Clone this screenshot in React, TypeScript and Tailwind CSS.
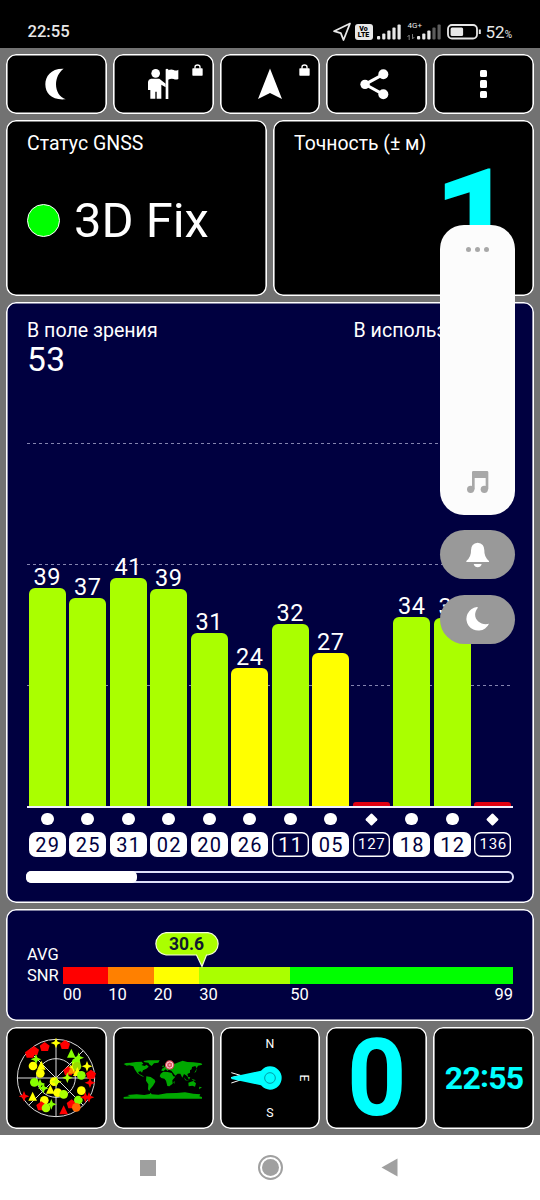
import type { ReactNode } from 'react';

const FONT = "font-['Roboto',sans-serif]";

interface Satellite {
  id: string;
  snr: number | null;
  height: number;
  color: string;
  used: boolean;
  shape: 'circle' | 'diamond';
}

const LIME = 'bg-[#aaff00]';
const YELLOW = 'bg-[#ffff00]';
const RED = 'bg-[#e00010]';

const satellites: Satellite[] = [
  { id: '29', snr: 39, height: 218, color: LIME, used: true, shape: 'circle' },
  { id: '25', snr: 37, height: 208, color: LIME, used: true, shape: 'circle' },
  { id: '31', snr: 41, height: 228, color: LIME, used: true, shape: 'circle' },
  { id: '02', snr: 39, height: 217, color: LIME, used: true, shape: 'circle' },
  { id: '20', snr: 31, height: 173, color: LIME, used: true, shape: 'circle' },
  { id: '26', snr: 24, height: 138, color: YELLOW, used: true, shape: 'circle' },
  { id: '11', snr: 32, height: 182, color: LIME, used: false, shape: 'circle' },
  { id: '05', snr: 27, height: 153, color: YELLOW, used: true, shape: 'circle' },
  { id: '127', snr: null, height: 4, color: RED, used: false, shape: 'diamond' },
  { id: '18', snr: 34, height: 189, color: LIME, used: true, shape: 'circle' },
  { id: '12', snr: 34, height: 188, color: LIME, used: true, shape: 'circle' },
  { id: '136', snr: null, height: 4, color: RED, used: false, shape: 'diamond' },
];

function Panel({ className, children }: { className: string; children?: ReactNode }) {
  return (
    <div className={`relative rounded-[10px] shadow-[inset_0_0_0_1.6px_#fff] ${className}`}>
      {children}
    </div>
  );
}

function Tile({ children }: { children: ReactNode }) {
  return (
    <Panel className="flex h-full flex-1 items-center justify-center bg-black">{children}</Panel>
  );
}

function Signal({ dim }: { dim?: boolean }) {
  return (
    <svg width="24" height="16" viewBox="0 0 24 16" fill="#e8e8e8">
      <rect x="0" y="12" width="3.2" height="3.5" rx="1" />
      <rect x="5.2" y="9.5" width="3.2" height="6" rx="1" />
      <rect x="10.3" y="6.5" width="3.2" height="9" rx="1" />
      <rect x="15.4" y="3.5" width="3.2" height="12" rx="1" opacity={dim ? 0.4 : 1} />
      <rect x="20.5" y="0.5" width="3.2" height="15" rx="1" opacity={dim ? 0.4 : 1} />
    </svg>
  );
}

function StatusBar() {
  return (
    <div className="flex h-12 items-center bg-black pt-4 pr-[28px] pl-[27.5px] text-[#e8e8e8]">
      <span className="flex-1 text-[16.6px] leading-none font-medium">22:55</span>
      <svg width="20" height="20" viewBox="0 0 20 20" className="mr-[3px]">
        <path
          d="M18 1.5L2 9.2L8.8 11.2L11.5 18Z"
          fill="none"
          stroke="#e8e8e8"
          strokeWidth="1.8"
          strokeLinejoin="round"
        />
      </svg>
      <span className="mr-[4px] flex h-[16px] w-[18px] flex-col items-center justify-center rounded-[3px] bg-[#e8e8e8] text-[7px] leading-[6.5px] font-black text-black">
        <span>Vo</span>
        <span>LTE</span>
      </span>
      <Signal />
      <div className="relative ml-[16px]">
        <span className="absolute -top-[2px] -left-[9px] text-[8px] leading-none">4G+</span>
        <svg
          width="8"
          height="6"
          viewBox="0 0 8 6"
          className="absolute bottom-0 -left-[10px]"
          stroke="#777"
          fill="none"
        >
          <path d="M2.2 6V1L0.5 3M5.5 0V5L7.3 3" />
        </svg>
        <Signal dim />
      </div>
      <svg width="35" height="16" viewBox="0 0 35 16" className="mr-[4px] ml-[6px]">
        <rect x="1" y="1" width="29" height="13.5" rx="4" fill="none" stroke="#e8e8e8" strokeWidth="1.8" />
        <rect x="3.6" y="3.6" width="12.5" height="8.4" rx="1.5" fill="#e8e8e8" />
        <path d="M32.8 5.5V10" stroke="#e8e8e8" strokeWidth="2" />
      </svg>
      <span className="text-[17px] leading-none">
        52<span className="text-[10px]">%</span>
      </span>
    </div>
  );
}

function Lock() {
  return (
    <svg width="11" height="12" viewBox="577 193 33 36" className="absolute top-[10px] right-[10.5px]">
      <rect x="578" y="206" width="31" height="22" rx="2" fill="#fff" />
      <path d="M586 207V202Q586 196 593.5 196Q601 196 601 202V207" fill="none" stroke="#fff" strokeWidth="4" />
    </svg>
  );
}

function Toolbar() {
  return (
    <div className="flex h-[60px] gap-[6px]">
      <Tile>
        <svg width="30" height="32" viewBox="124 204 90 96" fill="#fff">
          <path d="M192 206C153 205 137 229 137 253C137 281 157 302 198 298C180 292 169 274 169 253C169 233 178 216 192 206Z" />
        </svg>
      </Tile>
      <Tile>
        <svg width="34" height="32" viewBox="438 204 102 96" fill="#fff">
          <circle cx="467" cy="220" r="13" />
          <path d="M453 236H478L497 251V262L484 254V296H470V275H466V296H451V270H444V245Q445 237 453 236Z" />
          <path d="M497 208Q501 205 505 208V297H497Z" />
          <path d="M504 211Q514 206 521 210T535 209V237Q528 240 521 237T504 239Z" />
        </svg>
        <Lock />
      </Tile>
      <Tile>
        <svg width="26" height="32" viewBox="0 0 26 32" fill="#fff">
          <path d="M13 0.5L25 31L13 25L1 31Z" />
        </svg>
        <Lock />
      </Tile>
      <Tile>
        <svg width="34" height="32" viewBox="270 204 102 96" fill="#fff">
          <path d="M340 223L285 253L340 283" fill="none" stroke="#fff" strokeWidth="9" />
          <circle cx="285" cy="253" r="14" />
          <circle cx="340" cy="223" r="15" />
          <circle cx="340" cy="283" r="15" />
        </svg>
      </Tile>
      <Tile>
        <div className="flex flex-col gap-[3px]">
          <span className="size-[7.3px] rounded-[1.5px] bg-white" />
          <span className="size-[7.3px] rounded-[1.5px] bg-white" />
          <span className="size-[7.3px] rounded-[1.5px] bg-white" />
        </div>
      </Tile>
    </div>
  );
}

function SummaryRow() {
  return (
    <div className="flex h-[176px] gap-[6px]">
      <Panel className="flex-1 bg-black px-[21px] pt-[12px]">
        <p className="text-[19.5px] leading-[24px]">Статус GNSS</p>
        <div className="mt-[36px] flex items-center gap-[14px]">
          <span className="size-[33px] rounded-full border border-white bg-[#00ff00]" />
          <span className="pt-[2px] text-[48.9px] leading-[54px]">3D Fix</span>
        </div>
      </Panel>
      <Panel className="flex-1 bg-black px-[21px] pt-[12px]">
        <p className="text-[19.4px] leading-[24px]">Точность (± м)</p>
        <p className="mt-[-8px] mr-[-4px] text-right text-[147px] leading-[150px] font-bold text-[#00ffff]">1</p>
      </Panel>
    </div>
  );
}

function GridLine() {
  return (
    <div className="mb-[120px] h-px bg-[repeating-linear-gradient(90deg,#8484b0_0_3px,transparent_3px_6px)]" />
  );
}

function SatelliteBar({ sat }: { sat: Satellite }) {
  return (
    <div className="flex flex-1 flex-col items-center">
      {sat.snr !== null && (
        <span className="text-[23.5px] leading-[21px] tracking-[0.5px]">{sat.snr}</span>
      )}
      <span
        className={`w-[36.6px] ${sat.snr !== null ? 'rounded-t-[6px]' : 'rounded-t-[3px]'} ${sat.color}`}
        style={{ height: sat.height }}
      />
    </div>
  );
}

function SatellitePanel() {
  return (
    <Panel className="h-[601px] bg-[#000040] px-[21px] pt-[17px]">
      <div className="flex text-[19.6px] leading-[24px]">
        <div className="w-[326.5px]">
          <p>В поле зрения</p>
          <p className="mt-[-1px] text-[33.5px] leading-[36px] tracking-[0.5px]">53</p>
        </div>
        <p className="whitespace-nowrap">В использ.</p>
      </div>
      <div className="relative mt-[65px] h-[365px] border-b-2 border-[#eeeeff]">
        <div>
          <GridLine />
          <GridLine />
          <GridLine />
        </div>
        <div className="absolute inset-0 flex items-end">
          {satellites.map((s) => (
            <SatelliteBar key={s.id} sat={s} />
          ))}
        </div>
      </div>
      <div className="mt-[4px] flex">
        {satellites.map((s) => (
          <div key={s.id} className="flex flex-1 flex-col items-center">
            <span className="flex h-[14px] items-center">
              {s.shape === 'circle' ? (
                <span className="size-[12.6px] rounded-full bg-white" />
              ) : (
                <span className="size-[9px] rotate-45 rounded-[1px] bg-white" />
              )}
            </span>
            <span
              className={`mt-[6px] flex h-[25px] w-[36.6px] items-center justify-center rounded-[7px] ${
                s.used ? 'bg-white text-[#000040]' : 'text-white shadow-[inset_0_0_0_1.4px_#fff]'
              } ${s.id.length > 2 ? 'text-[15px] tracking-[0.7px]' : 'text-[20px] tracking-[1.2px]'}`}
            >
              <span className="-mr-[1px]">{s.id}</span>
            </span>
          </div>
        ))}
      </div>
      <div className="mx-[-1px] mt-[14px] h-[12px] rounded-full shadow-[inset_0_0_0_2px_#dddff8]">
        <div className="h-full w-[111px] rounded-[5px] bg-white" />
      </div>
    </Panel>
  );
}

function SnrPanel() {
  return (
    <Panel className="flex h-[112px] bg-[#000040] px-[21px] pt-[23px]">
      <div className="w-[36px] pt-[12px] text-[16.5px] leading-[21px]">
        <p>AVG</p>
        <p>SNR</p>
      </div>
      <div className="flex-1">
        <div className="relative h-[35px]">
          <svg width="66" height="36" viewBox="0 0 66 36" className="absolute left-[90.5px]">
            <path
              d="M12 .7H54A11.2 11.2 0 0 1 54 23H52.5L48 34.5L42.5 23H12A11.2 11.2 0 0 1 12 .7Z"
              fill="#aaff00"
              stroke="#f4ffd8"
              strokeWidth="1.2"
            />
          </svg>
          <span className="absolute top-[3px] left-[91px] w-[65px] text-center text-[17.5px] leading-[18px] font-bold text-[#101830]">
            30.6
          </span>
        </div>
        <div className="flex h-[17px]">
          <span className="w-[45.3px] bg-[#ff0000]" />
          <span className="w-[45.5px] bg-[#ff8000]" />
          <span className="w-[45.5px] bg-[#ffff00]" />
          <span className="w-[91px] bg-[#aaff00]" />
          <span className="flex-1 bg-[#00ff00]" />
        </div>
        <div className="flex pt-[1px] text-[16.5px] leading-[20px]">
          <span className="w-[45.3px]">00</span>
          <span className="w-[45.5px]">10</span>
          <span className="w-[45.5px]">20</span>
          <span className="w-[91px]">30</span>
          <span>50</span>
          <span className="ml-auto">99</span>
        </div>
      </div>
    </Panel>
  );
}

type Mark = ['star' | 'dot' | 'tri' | 'pent', number, number, string];

const marks: Mark[] = [
  ['pent', 91, 99, '#f00'],
  ['pent', 103, 91, '#f00'],
  ['pent', 135, 79, '#f00'],
  ['star', 169, 68, '#ff0'],
  ['pent', 196, 73, '#f00'],
  ['star', 109, 117, '#8f0'],
  ['tri', 215, 100, '#8f0'],
  ['star', 237, 112, '#8f0'],
  ['pent', 206, 152, '#f00'],
  ['dot', 229, 127, '#8f0'],
  ['tri', 217, 148, '#f80'],
  ['star', 222, 140, '#ff0'],
  ['dot', 232, 138, '#9d0'],
  ['dot', 100, 137, '#ff0'],
  ['tri', 125, 136, '#ff0'],
  ['dot', 122, 159, '#ff0'],
  ['star', 262, 138, '#ff0'],
  ['tri', 233, 155, '#ff0'],
  ['pent', 274, 162, '#f00'],
  ['dot', 245, 165, '#8f0'],
  ['star', 271, 187, '#f00'],
  ['star', 203, 172, '#af0'],
  ['dot', 104, 186, '#8f0'],
  ['star', 121, 191, '#8f0'],
  ['star', 131, 204, '#8f0'],
  ['dot', 163, 184, '#ff0'],
  ['star', 170, 184, '#cf0'],
  ['tri', 152, 208, '#ff0'],
  ['dot', 174, 217, '#ff0'],
  ['dot', 192, 222, '#af0'],
  ['dot', 245, 211, '#ff0'],
  ['star', 73, 228, '#f00'],
  ['tri', 99, 229, '#ff0'],
  ['dot', 134, 240, '#ff0'],
  ['pent', 125, 257, '#f00'],
  ['star', 155, 252, '#8f0'],
  ['dot', 139, 263, '#af0'],
  ['tri', 192, 270, '#f00'],
  ['pent', 216, 251, '#f00'],
  ['dot', 236, 239, '#8f0'],
  ['star', 257, 231, '#f00'],
  ['star', 268, 231, '#f00'],
  ['dot', 230, 261, '#f60'],
];

const markPaths = {
  star: 'M0 -16L4.5 -4.5L16 0L4.5 4.5L0 16L-4.5 4.5L-16 0L-4.5 -4.5Z',
  tri: 'M0 -15L13 12H-13Z',
  pent: 'M0 -14L15 -3L10 13H-10L-15 -3Z',
  dot: 'M-13 0A13 13 0 1 0 13 0A13 13 0 1 0 -13 0Z',
};

function SkyPlot() {
  return (
    <svg width="84" height="84" viewBox="43 47 252 252">
      <g fill="none" stroke="#ddd" strokeWidth="3">
        <circle cx="169" cy="173" r="116" />
        <circle cx="169" cy="173" r="58" />
        <path d="M53 173H285M169 57V289M87 91L251 255M251 91L87 255" />
      </g>
      {marks.map(([shape, x, y, color]) => (
        <path key={`${x}-${y}`} d={markPaths[shape]} transform={`translate(${x} ${y})`} fill={color} />
      ))}
    </svg>
  );
}

function WorldMap() {
  return (
    <svg width="80" height="80" viewBox="369 53 240 240">
      <g fill="#00a800">
        <path d="M371 131L378 128L392 127L408 125L425 124L430 130L424 134L434 137L440 133L446 139L439 145L429 150L426 157L422 153L414 155L418 161L428 166L433 171L424 167L412 159L404 147L400 138L388 135L380 136Z" />
        <path d="M430 122L445 120L479 120L475 127L462 129L455 137L449 133L445 127L434 126Z" />
        <path d="M439 168L452 170L464 178L466 184L459 196L450 207L448 213L444 207L445 192L438 181Z" />
        <path d="M484 151L486 145L492 142L497 135L506 128L516 128L525 130L532 127L548 121L562 125L580 126L604 129L607 133L594 136L590 144L586 137L576 140L575 147L570 150L570 157L562 161L565 171L558 165L552 161L547 172L541 160L533 160L526 166L519 157L514 151L506 148L503 152L497 147L491 152Z" />
        <path d="M482 160L490 154L503 155L515 158L520 168L526 169L517 180L518 190L508 198L502 197L498 181L493 175L484 173L479 168Z" />
        <path d="M520 186L524 182L523 191Z" />
        <path d="M551 170L558 178L568 181L556 180ZM563 170L571 171L567 178ZM574 175L588 180L581 181Z" />
        <path d="M565 187L573 184L580 182L588 189L585 199L577 196L566 198ZM598 199L606 201L597 207Z" />
        <path d="M486 140L490 134L492 141ZM591 143L588 154L583 158Z" />
        <path d="M371 230L390 228L382 224L410 222L433 224L449 221L452 217L455 222L475 223L500 219L530 218L555 216L580 220L601 222L598 228L606 230V235H371Z" />
      </g>
      <circle cx="509" cy="134" r="14" fill="#d84858" />
      <circle cx="509" cy="134" r="9.5" fill="#e05868" stroke="#ffe0e0" strokeWidth="3" />
      <circle cx="509" cy="134" r="3" fill="#f8b0b0" />
    </svg>
  );
}

function Compass() {
  return (
    <svg width="84" height="84" viewBox="39 47 252 252" className="font-['Roboto',sans-serif]">
      <g fill="#fff" fontSize="37" textAnchor="middle">
        <text x="165" y="84">N</text>
        <text x="165" y="291">S</text>
        <text transform="translate(254 173) rotate(90)">E</text>
      </g>
      <path d="M49 157L76 165L49 172L76 179L49 188" fill="none" stroke="#fff" strokeWidth="3" />
      <path d="M49 170L138 151Q150 138 165 138A35 35 0 0 1 165 208Q150 208 138 195L49 176Z" fill="#00ffff" />
      <circle cx="165" cy="173" r="16" fill="none" stroke="#009ca8" strokeWidth="3" />
    </svg>
  );
}

function BottomTiles() {
  return (
    <div className="flex h-[102px] gap-[6px]">
      <Tile>
        <SkyPlot />
      </Tile>
      <Tile>
        <WorldMap />
      </Tile>
      <Tile>
        <Compass />
      </Tile>
      <Tile>
        <span className="translate-y-px scale-x-[.97] text-[107px] leading-[102px] font-bold text-[#00ffff]">0</span>
      </Tile>
      <Tile>
        <span className="-mr-px text-[32px] leading-none font-bold tracking-[-0.8px] text-[#00ffff]">
          22<span className="relative -top-[2px]">:</span>55
        </span>
      </Tile>
    </div>
  );
}

// volume slider with the two mode buttons, floating over the panels
function VolumeOverlay() {
  return (
    <div className="absolute top-[225px] left-[440px] flex w-[75px] flex-col">
      <div className="flex h-[290px] flex-col items-center justify-between rounded-[24px] bg-[#fcfcfc] pt-[21.5px] pb-[21px]">
        <div className="flex gap-[4px]">
          <span className="size-[5px] rounded-full bg-[#a8a8a8]" />
          <span className="size-[5px] rounded-full bg-[#a8a8a8]" />
          <span className="size-[5px] rounded-full bg-[#a8a8a8]" />
        </div>
        <svg width="24" height="24" viewBox="585 60 72 72" fill="#a8a8a8">
          <path d="M603 67Q603 63 607 63H648Q652 63 652 67V118H644V84H611V118H603Z" />
          <circle cx="599" cy="118" r="11" />
          <circle cx="640" cy="118" r="11" />
        </svg>
      </div>
      <div className="mt-[15px] flex h-[49px] items-center justify-center rounded-full bg-[#999999]">
        <svg width="24" height="26" viewBox="587 275 72 78" fill="#fff">
          <path d="M622 277Q642 279 642 300Q641 320 656 332V335H588V332Q603 320 602 300Q602 279 622 277Z" />
          <path d="M610 341H634Q631 351 622 351T610 341Z" />
        </svg>
      </div>
      <div className="mt-[15.5px] flex h-[49px] items-center justify-center rounded-full bg-[#999999]">
        <svg width="24" height="26" viewBox="587 469 72 78" fill="#fff">
          <path d="M620 472A35.5 35.5 0 1 0 656 522C630 530 600 504 622 475Q623 471 620 472Z" />
        </svg>
      </div>
    </div>
  );
}

function NavBar() {
  return (
    <div className="flex h-[65px] items-center bg-white pl-[140px]">
      <span className="size-[16px] bg-[#a0a0a0]" />
      <span className="ml-[102px] flex size-[25px] items-center justify-center rounded-full border-2 border-[#a0a0a0]">
        <span className="size-[17px] rounded-full bg-[#a0a0a0]" />
      </span>
      <svg width="17" height="19" viewBox="0 0 17 19" className="ml-[98px]">
        <path d="M16.5 0.5V18.5L0.5 9.5Z" fill="#a0a0a0" />
      </svg>
    </div>
  );
}

export default function App() {
  return (
    <div className={`relative h-[1200px] w-[540px] overflow-hidden bg-[#727272] text-white ${FONT}`}>
      <StatusBar />
      <div className="flex flex-col gap-[6px] p-[6px]">
        <Toolbar />
        <SummaryRow />
        <SatellitePanel />
        <SnrPanel />
        <BottomTiles />
      </div>
      <NavBar />
      <VolumeOverlay />
    </div>
  );
}
